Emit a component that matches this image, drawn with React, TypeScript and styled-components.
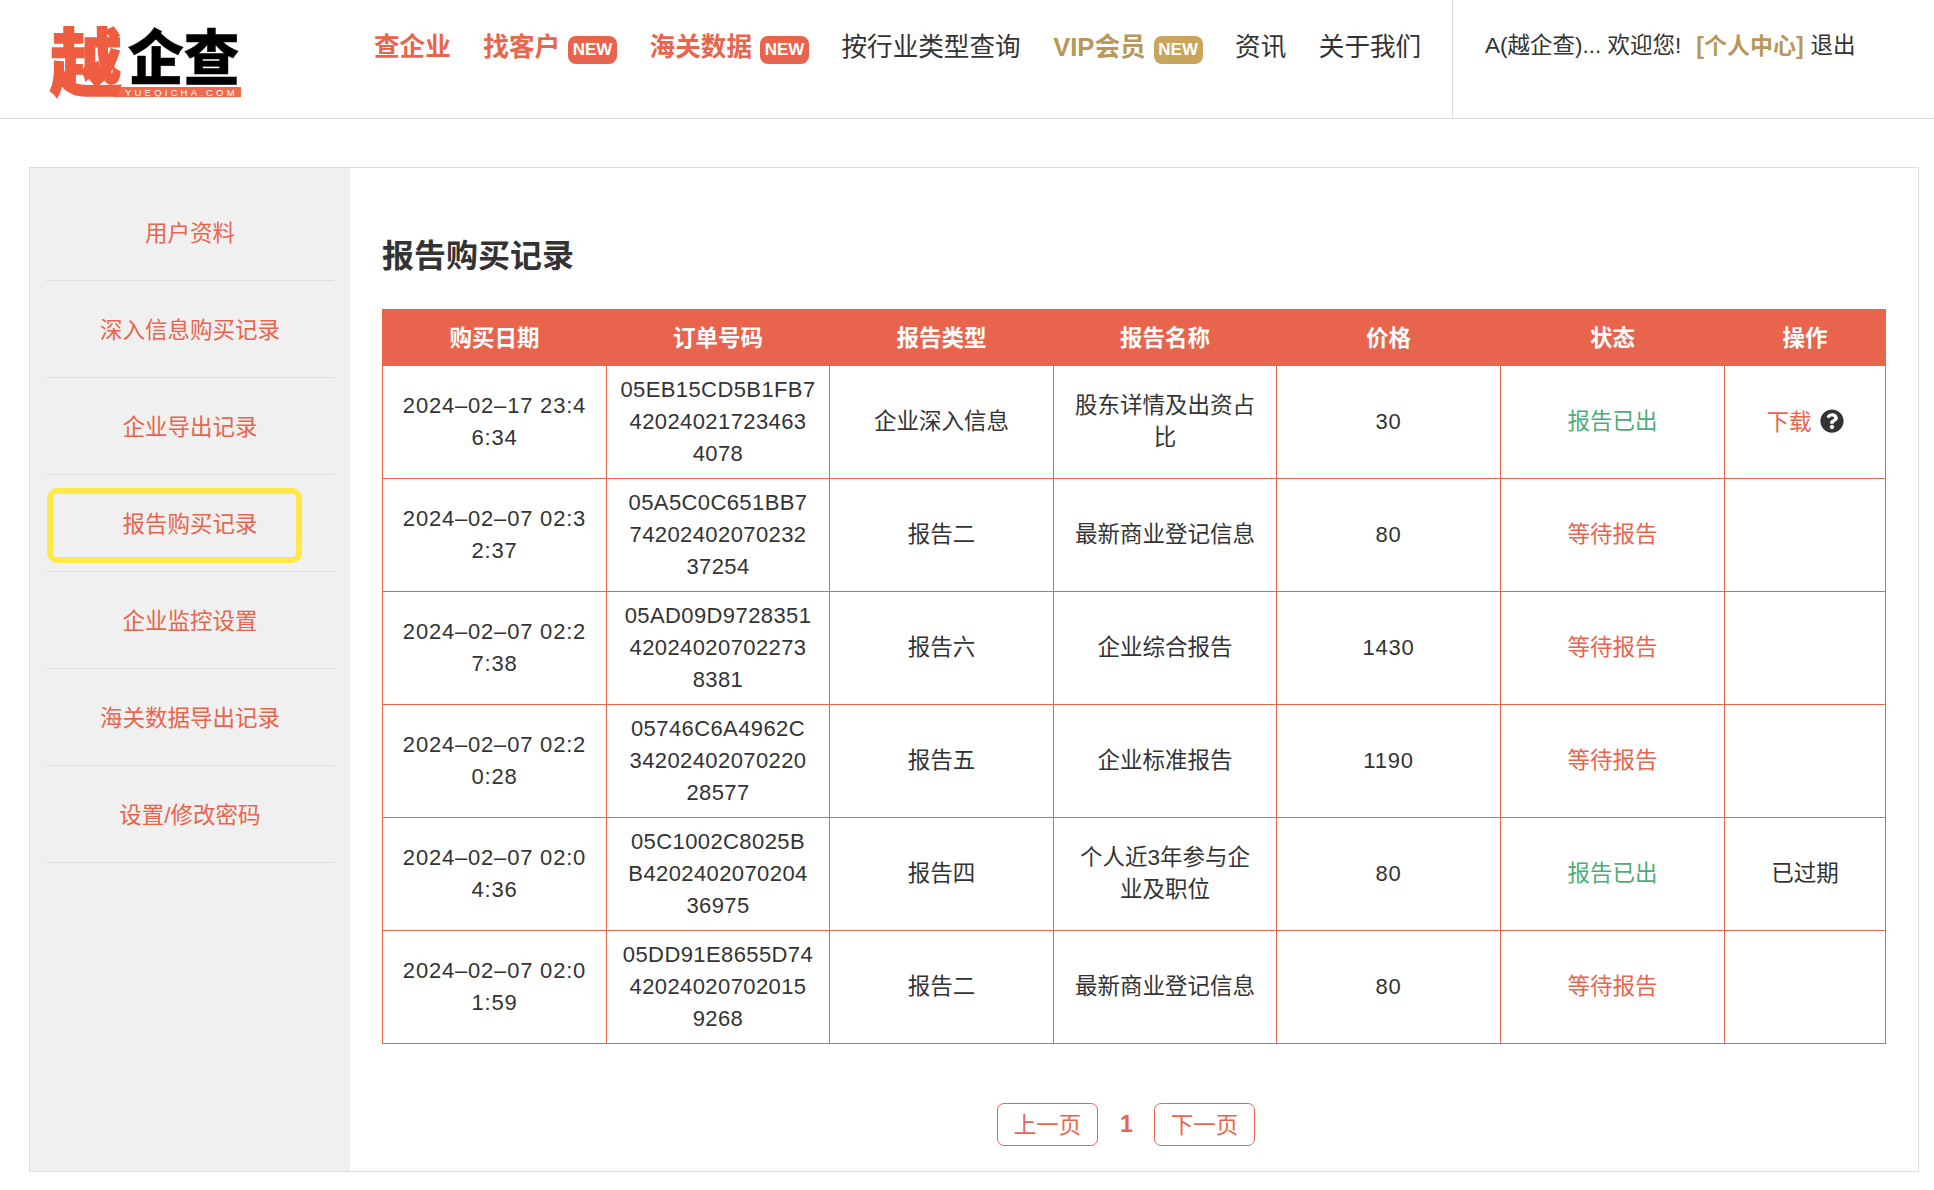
import React from "react";
import styled, { createGlobalStyle } from "styled-components";
import { FaQuestionCircle } from "react-icons/fa";

const CORAL = "#e8644d";
const GOLD = "#b8975a";
const LINE = "#dddddd";
const INK = "#333333";

const Global = createGlobalStyle`
  html, body { margin: 0; padding: 0; background: #fff; }
  body { font-family: "Liberation Sans", "Noto Sans CJK SC", sans-serif; color: ${INK}; }
  * { box-sizing: border-box; }
`;

const Page = styled.div`
  width: 1934px;
  height: 1190px;
  overflow: hidden;
`;

const Header = styled.header`
  display: flex;
  align-items: flex-start;
  height: 119px;
  padding-left: 50px;
  border-bottom: 1px solid ${LINE};
`;

const LogoMark = styled.svg`
  flex: none;
  width: 192px;
  height: 76px;
  margin-top: 25px;
  overflow: visible;
`;

const Nav = styled.nav`
  display: flex;
  gap: 32.5px;
  margin-left: 132px;
  padding-top: 30px;
  width: 1078px;
  flex: none;
`;

const NavItem = styled.a<{ $tone?: "coral" | "gold" }>`
  display: flex;
  align-items: center;
  font-size: 25.6px;
  line-height: 32px;
  white-space: nowrap;
  font-weight: ${(p) => (p.$tone ? 600 : 400)};
  color: ${(p) => (p.$tone === "coral" ? CORAL : p.$tone === "gold" ? GOLD : INK)};
`;

const NewBadge = styled.span<{ $gold?: boolean }>`
  width: 49px;
  height: 28px;
  margin: 6px 0 0 8px;
  border-radius: 8px;
  background: ${(p) => (p.$gold ? "#c9a45c" : CORAL)};
  color: #fff;
  font-size: 17px;
  font-weight: 700;
  line-height: 28px;
  text-align: center;
`;

const UserArea = styled.div`
  flex: none;
  height: 118px;
  display: flex;
  align-items: flex-start;
  padding: 30px 0 0 32px;
  border-left: 1px solid ${LINE};
  font-size: 22.5px;
  line-height: 32px;
  white-space: nowrap;
`;

const Greeting = styled.span`
  margin-right: 15px;
`;

const CenterLink = styled.a`
  color: ${GOLD};
  font-size: 23px;
  font-weight: 600;
  margin-right: 7px;
`;

const Panel = styled.main`
  display: flex;
  width: 1890px;
  height: 1005px;
  margin: 48px 0 0 29px;
  border: 1px solid ${LINE};
`;

const Sidebar = styled.aside`
  flex: none;
  width: 320px;
  padding: 16px 16px 0;
  background: #f0f0f0;
`;

const SideItem = styled.a`
  position: relative;
  display: flex;
  align-items: center;
  justify-content: center;
  height: 97px;
  padding-bottom: 3px;
  border-bottom: 1px solid ${LINE};
  color: ${CORAL};
  font-size: 22.5px;
`;

const Highlight = styled.span`
  position: absolute;
  left: 1px;
  top: 13px;
  width: 255px;
  height: 75px;
  border: 6px solid #ffe84a;
  border-radius: 10px;
`;

const Content = styled.section`
  flex: 1;
  padding: 64px 33px 0 32px;
`;

const Title = styled.h1`
  margin: 0 0 29px;
  height: 48px;
  font-size: 32px;
  line-height: 48px;
  font-weight: 700;
  color: ${INK};
`;

const Table = styled.table`
  width: 1503px;
  table-layout: fixed;
  border-collapse: collapse;
`;

const HeadCell = styled.th`
  height: 56px;
  padding: 0 0 4px;
  background: ${CORAL};
  border: 1px solid ${CORAL};
  color: #fff;
  font-size: 22.5px;
  font-weight: 700;
`;

const Cell = styled.td<{ $tone?: "coral" | "green" }>`
  height: 113px;
  padding: 8px 20px;
  border: 1px solid ${CORAL};
  text-align: center;
  font-size: 22.5px;
  line-height: 32px;
  word-break: break-all;
  color: ${(p) => (p.$tone === "coral" ? CORAL : p.$tone === "green" ? "#4cae74" : INK)};
`;

const NumberCell = styled(Cell)`
  padding: 8px 14px;
  font-size: 22px;
  letter-spacing: 0.8px;
`;

const OrderCell = styled(Cell)`
  padding: 8px 10px;
  font-size: 22px;
  letter-spacing: 0.4px;
`;

const OrderLine = styled.span`
  display: block;
  white-space: nowrap;
`;

const DownloadWrap = styled.span`
  display: inline-flex;
  align-items: center;
  gap: 8px;
  vertical-align: middle;
`;

const DownloadLink = styled.a`
  color: ${CORAL};
`;

const HelpIcon = styled(FaQuestionCircle)`
  width: 24px;
  height: 24px;
  color: ${INK};
  margin-top: -4px;
`;

const Pager = styled.div`
  display: flex;
  align-items: center;
  justify-content: center;
  margin-top: 59px;
  padding-right: 16px;
`;

const PageButton = styled.button`
  width: 101px;
  height: 43px;
  padding: 0 0 3px;
  border: 1px solid ${CORAL};
  border-radius: 7px;
  background: #fff;
  color: ${CORAL};
  font-family: inherit;
  font-size: 22.5px;
`;

const PageNumber = styled.span`
  width: 12px;
  margin: 0 22px;
  color: ${CORAL};
  font-size: 23px;
  font-weight: 700;
  text-align: center;
`;

const sideLinks = ["用户资料", "深入信息购买记录", "企业导出记录", "报告购买记录", "企业监控设置", "海关数据导出记录", "设置/修改密码"];
const columns = ["购买日期", "订单号码", "报告类型", "报告名称", "价格", "状态", "操作"];
const widths = [224, 223, 224, 223, 224, 224, 161];

type Row = { date: string; order: string[]; type: string; name: string; price: string; done: boolean; action?: "download" | "expired" };

const rows: Row[] = [
  { date: "2024–02–17 23:46:34", order: ["05EB15CD5B1FB7", "42024021723463", "4078"], type: "企业深入信息", name: "股东详情及出资占比", price: "30", done: true, action: "download" },
  { date: "2024–02–07 02:32:37", order: ["05A5C0C651BB7", "74202402070232", "37254"], type: "报告二", name: "最新商业登记信息", price: "80", done: false },
  { date: "2024–02–07 02:27:38", order: ["05AD09D9728351", "42024020702273", "8381"], type: "报告六", name: "企业综合报告", price: "1430", done: false },
  { date: "2024–02–07 02:20:28", order: ["05746C6A4962C", "34202402070220", "28577"], type: "报告五", name: "企业标准报告", price: "1190", done: false },
  { date: "2024–02–07 02:04:36", order: ["05C1002C8025B", "B4202402070204", "36975"], type: "报告四", name: "个人近3年参与企业及职位", price: "80", done: true, action: "expired" },
  { date: "2024–02–07 02:01:59", order: ["05DD91E8655D74", "42024020702015", "9268"], type: "报告二", name: "最新商业登记信息", price: "80", done: false },
];

const Logo = () => (
  <LogoMark viewBox="0 0 192 76" aria-label="越企查">
    <rect x="64" y="62" width="127" height="10" fill="#ef6a4e" />
    <text transform="translate(0 65) scale(0.92 0.95)" fontSize="78" fontWeight="900" fill="#ef5d41" stroke="#ef5d41" strokeWidth="1.5" fontFamily="Noto Sans CJK SC, sans-serif">越</text>
    <text transform="translate(78 55) scale(0.93 1)" fontSize="60" fontWeight="900" fill="#000" stroke="#000" strokeWidth="0.5" fontFamily="Noto Sans CJK SC, sans-serif">企查</text>
    <text x="75" y="70.6" fontSize="9.5" letterSpacing="3.2" fill="#fff" fontFamily="Liberation Sans, sans-serif">YUEQICHA.COM</text>
  </LogoMark>
);

export default function App() {
  return (
    <Page>
      <Global />
      <Header>
        <Logo />
        <Nav>
          <NavItem $tone="coral">查企业</NavItem>
          <NavItem $tone="coral">找客户<NewBadge>NEW</NewBadge></NavItem>
          <NavItem $tone="coral">海关数据<NewBadge>NEW</NewBadge></NavItem>
          <NavItem>按行业类型查询</NavItem>
          <NavItem $tone="gold">VIP会员<NewBadge $gold>NEW</NewBadge></NavItem>
          <NavItem>资讯</NavItem>
          <NavItem>关于我们</NavItem>
        </Nav>
        <UserArea>
          <Greeting>A(越企查)... 欢迎您!</Greeting>
          <CenterLink>[个人中心]</CenterLink>
          <span>退出</span>
        </UserArea>
      </Header>
      <Panel>
        <Sidebar>
          {sideLinks.map((label, i) => (
            <SideItem key={label}>
              {label}
              {i === 3 && <Highlight />}
            </SideItem>
          ))}
        </Sidebar>
        <Content>
          <Title>报告购买记录</Title>
          <Table>
            <colgroup>
              {widths.map((w, i) => <col key={i} width={w} />)}
            </colgroup>
            <thead>
              <tr>{columns.map((c) => <HeadCell key={c}>{c}</HeadCell>)}</tr>
            </thead>
            <tbody>
              {rows.map((r) => (
                <tr key={r.order[0]}>
                  <NumberCell>{r.date}</NumberCell>
                  <OrderCell>
                    {r.order.map((line) => <OrderLine key={line}>{line}</OrderLine>)}
                  </OrderCell>
                  <Cell>{r.type}</Cell>
                  <Cell>{r.name}</Cell>
                  <NumberCell>{r.price}</NumberCell>
                  <Cell $tone={r.done ? "green" : "coral"}>{r.done ? "报告已出" : "等待报告"}</Cell>
                  <Cell>
                    {r.action === "download" && (
                      <DownloadWrap>
                        <DownloadLink>下载</DownloadLink>
                        <HelpIcon />
                      </DownloadWrap>
                    )}
                    {r.action === "expired" && "已过期"}
                  </Cell>
                </tr>
              ))}
            </tbody>
          </Table>
          <Pager>
            <PageButton>上一页</PageButton>
            <PageNumber>1</PageNumber>
            <PageButton>下一页</PageButton>
          </Pager>
        </Content>
      </Panel>
    </Page>
  );
}
